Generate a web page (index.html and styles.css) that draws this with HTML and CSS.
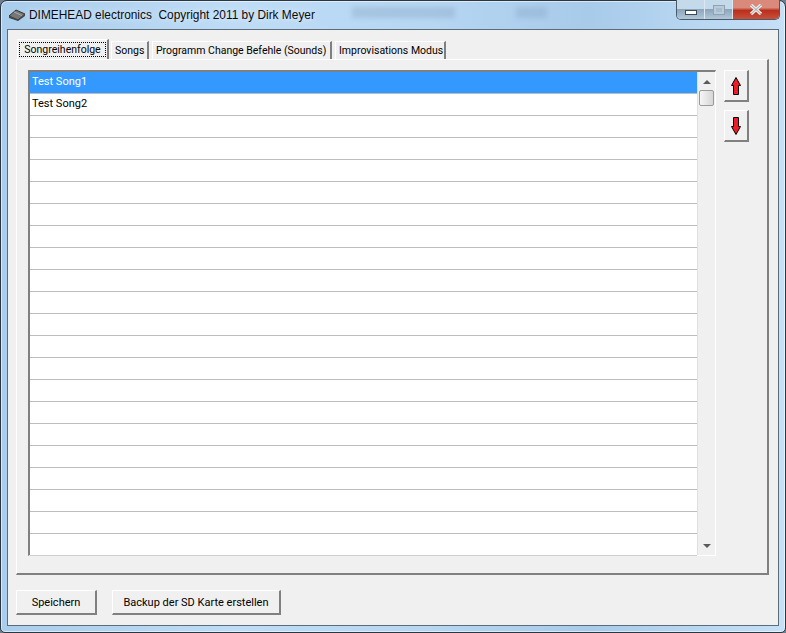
FILE: index.html
```html
<!DOCTYPE html>
<html lang="de">
<head>
<meta charset="utf-8">
<title>DIMEHEAD electronics</title>
<link rel="stylesheet" href="styles.css">
</head>
<body>
<div class="window">
  <header class="titlebar">
    <svg class="app-icon" width="18" height="14" viewBox="0 0 18 14">
      <path d="M1 8 L8 2 L17 6 L10 12 Z" fill="#777" stroke="#333"/>
      <path d="M1 8 L1 10 L10 13 L17 8 L17 6 L10 12 Z" fill="#444"/>
      <path d="M6 4 L14 7.5" stroke="#aaa" stroke-width="1"/>
    </svg>
    <span class="title">DIMEHEAD electronics&nbsp; Copyright 2011 by Dirk Meyer</span>
    <div class="smudge"></div>
    <div class="controls">
      <div class="ctl ctl-min"><span class="min-glyph"></span></div>
      <div class="ctl ctl-max"><span class="max-glyph"></span></div>
      <div class="ctl ctl-close">
        <svg width="14" height="11" viewBox="0 0 14 11"><path d="M2 1 L12 10 M12 1 L2 10" stroke="#e8e8e8" stroke-width="3.4"/><path d="M2 1 L12 10 M12 1 L2 10" stroke="#6a6a6a" stroke-width="0.5"/></svg>
      </div>
    </div>
  </header>
  <main class="client">
    <nav class="tabs">
      <div class="tab active"><span class="focus">Songreihenfolge</span></div>
      <div class="tab t2">Songs</div>
      <div class="tab t3">Programm Change Befehle (Sounds)</div>
      <div class="tab t4">Improvisations Modus</div>
    </nav>
    <section class="panel">
      <div class="listbox">
        <div class="rows">
          <div class="row selected">Test Song1</div>
          <div class="row">Test Song2</div>
          <div class="row"></div><div class="row"></div><div class="row"></div><div class="row"></div>
          <div class="row"></div><div class="row"></div><div class="row"></div><div class="row"></div>
          <div class="row"></div><div class="row"></div><div class="row"></div><div class="row"></div>
          <div class="row"></div><div class="row"></div><div class="row"></div><div class="row"></div>
          <div class="row"></div><div class="row"></div><div class="row"></div><div class="row"></div>
        </div>
        <div class="scrollbar">
          <div class="arrow-up"></div>
          <div class="thumb"></div>
          <div class="arrow-down"></div>
        </div>
      </div>
      <div class="side">
        <button class="btn arrow-btn" type="button">
          <svg width="10" height="18" viewBox="0 0 10 18"><path d="M5 .5 L9.5 8.5 H7.5 V17.5 H2.5 V8.5 H.5 Z" fill="#ee1c25" stroke="#000"/></svg>
        </button>
        <button class="btn arrow-btn" type="button">
          <svg width="10" height="18" viewBox="0 0 10 18"><path d="M5 17.5 L9.5 9.5 H7.5 V.5 H2.5 V9.5 H.5 Z" fill="#ee1c25" stroke="#000"/></svg>
        </button>
      </div>
    </section>
    <footer class="actions">
      <button class="btn save" type="button">Speichern</button>
      <button class="btn backup" type="button">Backup der SD Karte erstellen</button>
    </footer>
  </main>
</div>
</body>
</html>
```
FILE: styles.css
```css
* { box-sizing: border-box; }
html, body { margin: 0; padding: 0; height: 100%; background: #6d7f8e; overflow: hidden; }
body { font-family: Roboto, "Liberation Sans", Arial, sans-serif; font-size: 11px; color: #000; }

.window {
  width: 786px;
  height: 633px;
  display: flex;
  flex-direction: column;
  padding: 0 6px 6px;
  border: 1px solid #2b3640;
  border-radius: 7px 7px 5px 5px;
  background: linear-gradient(90deg, #a9cdec 0%, #bedcf6 30%, #b6d6f2 55%, #a8cbea 75%, #c5e0f7 100%);
  box-shadow: inset 0 0 0 1px rgba(255,255,255,.55);
}

.titlebar {
  position: relative;
  height: 28px;
  flex: none;
  display: flex;
  align-items: center;
  gap: 3px;
  padding-left: 1px;
}
.app-icon { flex: none; }
.title { font-family: "Liberation Sans", Arial, sans-serif; font-size: 11.9px; color: #0b0b0b; text-shadow: 0 0 6px rgba(255,255,255,.9); white-space: nowrap; }
.smudge {
  position: absolute;
  left: 345px; top: 6px;
  width: 195px; height: 11px;
  background: linear-gradient(90deg, rgba(90,120,150,.2) 0 53%, transparent 53% 84%, rgba(90,120,150,.18) 84% 100%);
  filter: blur(2.5px);
}
.controls {
  position: absolute;
  right: -1px;
  top: -1px;
  display: flex;
  height: 20px;
  border: 1px solid #4c5a68;
  border-top: 0;
  border-radius: 0 0 5px 5px;
  overflow: hidden;
}
.ctl { display: flex; align-items: center; justify-content: center; height: 100%; }
.ctl-min, .ctl-max { width: 28px; background: linear-gradient(#c4d9ea 0 45%, #8ba5bb 50%, #b2c8da 100%); border-right: 1px solid #dce8f1; }
.ctl-close { width: 46px; background: linear-gradient(#d98a7a 0 40%, #b8301c 55%, #c9503a 100%); }
.min-glyph { width: 12px; height: 5px; margin-top: 6px; background: #fff; border: 1px solid #3a4a59; }
.max-glyph { width: 12px; height: 10px; border: 1px solid #8fa3b5; box-shadow: inset 0 0 0 2px #b9cad9; background: #a6bccf; }

.client {
  flex: 1;
  display: flex;
  flex-direction: column;
  min-height: 0;
  background: #f0f0f0;
  border: 1px solid #5e6b78;
  padding: 9px 9px 10px 8px;
}

.tabs { display: flex; height: 20px; padding-left: 1px; align-items: flex-end; flex: none; }
.tab {
  height: 18px;
  line-height: 17px;
  padding: 0 3px;
  background: #f0f0f0;
  border-top: 1px solid #fff;
  border-left: 1px solid #fff;
  border-right: 2px solid #808080;
  margin-left: 2px;
  white-space: nowrap;
  font-size: 10.5px;
}
.tab.active { margin-left: 0; height: 20px; padding: 2px 1px 0; width: 92px; line-height: 15px; }
.focus { display: block; border: 1px dotted #000; height: 15px; line-height: 13px; text-align: center; }
.t2 { width: 38px; }
.t3 { width: 180px; margin-left: 3px; }
.t4 { width: 111px; margin-left: 3px; }

.panel {
  flex: none;
  height: 516px;
  display: flex;
  align-items: flex-start;
  padding: 10px 19px 0 11px;
  gap: 8px;
  border-top: 1px solid #fff;
  border-left: 1px solid #fff;
  border-right: 2px solid #808080;
  border-bottom: 2px solid #808080;
}

.listbox {
  flex: none;
  width: 688px;
  height: 486px;
  display: flex;
  border-top: 2px solid #808080;
  border-left: 2px solid #808080;
  border-right: 1px solid #fff;
  border-bottom: 1px solid #fff;
  background: #fff;
}
.rows { flex: 1; min-width: 0; }
.row {
  height: 22px;
  line-height: 19px;
  padding-left: 2px;
  border-bottom: 1px solid #bdbdbd;
  background: #fff;
  font-size: 11px;
}
.row.selected { background: #3399ff; color: #fff; }
.row:last-child { border-bottom-color: #d0d0d0; }

.scrollbar {
  flex: none;
  width: 18px;
  position: relative;
  background: #f0f0f0;
  border-left: 1px solid #e0e0e0;
}
.arrow-up, .arrow-down {
  position: absolute;
  left: 5px;
  width: 0; height: 0;
  border-left: 4px solid transparent;
  border-right: 4px solid transparent;
}
.arrow-up { top: 8px; border-bottom: 4px solid #5a5a5a; }
.arrow-down { bottom: 7px; border-top: 4px solid #5a5a5a; }
.thumb {
  position: absolute;
  left: 1px;
  top: 18px;
  width: 15px;
  height: 16px;
  border: 1px solid #9a9a9a;
  border-radius: 2px;
  background: linear-gradient(90deg, #f6f6f6, #d6d6d6);
}

.side { display: flex; flex-direction: column; gap: 8px; flex: none; }

.btn {
  font: inherit;
  color: #000;
  background: #f0f0f0;
  border-top: 1px solid #fff;
  border-left: 1px solid #fff;
  border-right: 2px solid #808080;
  border-bottom: 2px solid #808080;
  padding: 0;
  display: flex;
  align-items: center;
  justify-content: center;
}
.arrow-btn { width: 25px; height: 32px; }

.actions { display: flex; gap: 15px; margin-top: 15px; flex: none; }
.save { width: 81px; height: 25px; }
.backup { width: 169px; height: 25px; }
```
